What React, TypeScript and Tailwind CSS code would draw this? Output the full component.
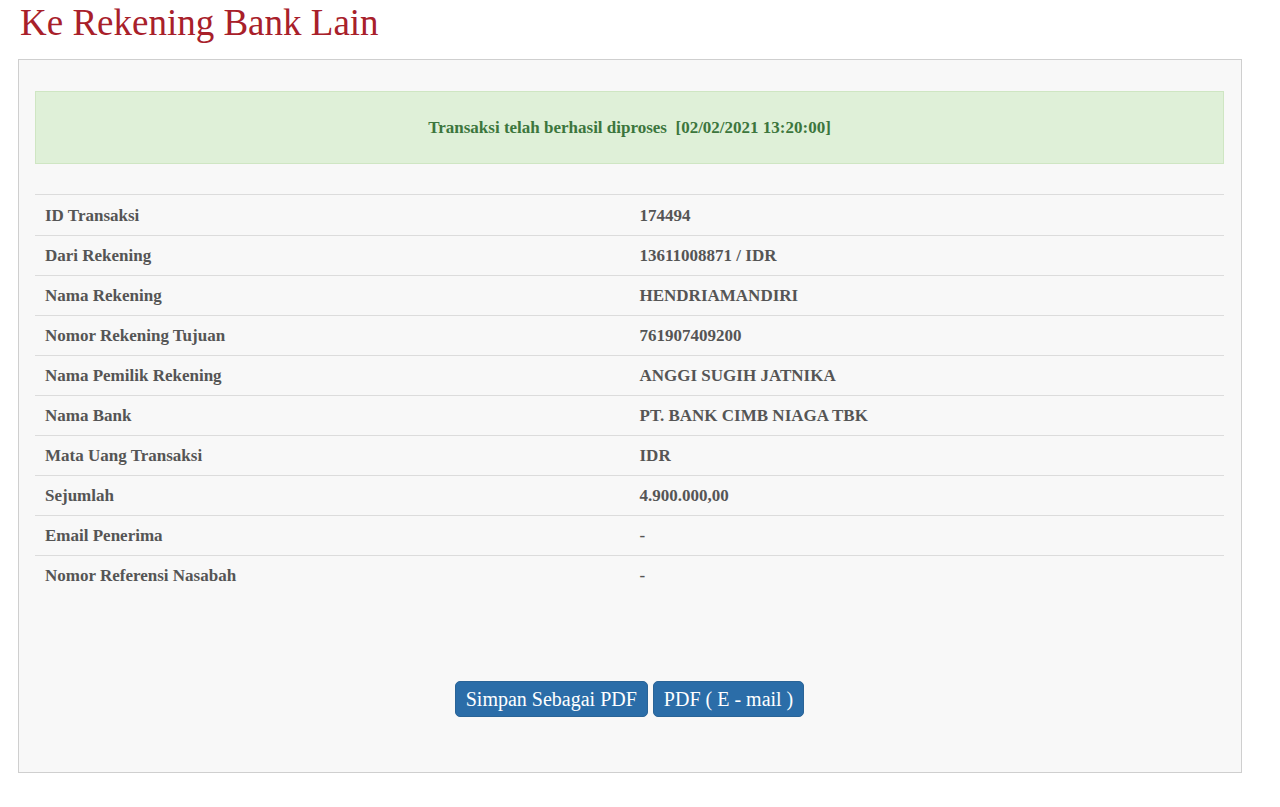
import React from "react";

const rows: [string, string][] = [
  ["ID Transaksi", "174494"],
  ["Dari Rekening", "13611008871 / IDR"],
  ["Nama Rekening", "HENDRIAMANDIRI"],
  ["Nomor Rekening Tujuan", "761907409200"],
  ["Nama Pemilik Rekening", "ANGGI SUGIH JATNIKA"],
  ["Nama Bank", "PT. BANK CIMB NIAGA TBK"],
  ["Mata Uang Transaksi", "IDR"],
  ["Sejumlah", "4.900.000,00"],
  ["Email Penerima", "-"],
  ["Nomor Referensi Nasabah", "-"],
];

export default function App() {
  return (
    <div
      className="min-h-[807px] bg-white"
      style={{ fontFamily: '"Liberation Serif", "Times New Roman", serif' }}
    >
      <h1 className="pl-[20px] pt-[3px] text-[37px] leading-[40px] text-[#a8202a]">
        Ke Rekening Bank Lain
      </h1>
      <div className="ml-[18px] mt-[16px] h-[714px] w-[1224px] border border-[#cfcfcf] bg-[#f8f8f8] pl-[16px] pr-[17px] pt-[31px]">
        <div className="flex h-[73px] items-center justify-center border border-[#cfe6c3] bg-[#dff0d8] text-[17px] font-bold text-[#3c763d]">
          Transaksi telah berhasil diproses&nbsp; [02/02/2021 13:20:00]
        </div>
        <div className="mt-[30px] border-t border-[#dcdcdc] pt-[1px]">
          {rows.map(([k, v], i) => (
            <div
              key={k}
              className={`grid h-[40px] grid-cols-2 items-center text-[17px] font-bold text-[#555555] ${
                i < rows.length - 1 ? "border-b border-[#dcdcdc]" : ""
              }`}
            >
              <div className="pl-[10px]">{k}</div>
              <div className="pl-[10px]">{v}</div>
            </div>
          ))}
        </div>
        <div className="mt-[85px] flex justify-center gap-[5px]">
          <button className="h-[36px] rounded-[5px] border border-[#2a6497] bg-[#2b6da8] px-[10px] text-[20px] text-white">
            Simpan Sebagai PDF
          </button>
          <button className="h-[36px] rounded-[5px] border border-[#2a6497] bg-[#2b6da8] px-[10px] text-[20px] text-white">
            PDF ( E - mail )
          </button>
        </div>
      </div>
    </div>
  );
}
